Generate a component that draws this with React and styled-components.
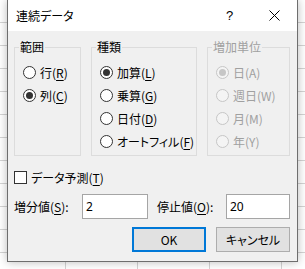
import React from "react";
import styled, { createGlobalStyle } from "styled-components";

const GlobalStyle = createGlobalStyle`
  html, body { margin: 0; padding: 0; }
  body {
    width: 305px;
    height: 269px;
    overflow: hidden;
    background-color: #ffffff;
    background-image:
      linear-gradient(to right, #d4d4d4 1px, transparent 1px),
      linear-gradient(to bottom, #d4d4d4 1px, transparent 1px);
    background-size: 72px 100%, 100% 23px;
    background-position: 65px 0, 0 22px;
    font-family: "Noto Sans CJK JP", "Noto Sans", sans-serif;
    font-feature-settings: "palt";
    font-size: 12px;
    color: #000;
  }
`;

const Dialog = styled.div`
  box-sizing: border-box;
  margin-left: 7px;
  width: 291px;
  height: 262px;
  border: 1px solid #6e6e6e;
  border-top: none;
  background: #f0f0f0;
  box-shadow: 0 0 9px rgba(0, 0, 0, 0.28);
  display: flex;
  flex-direction: column;
`;

const TitleBar = styled.div`
  height: 31px;
  background: #ffffff;
  display: flex;
  align-items: center;
`;

const Title = styled.div`
  flex: 1;
  padding-left: 8px;
  font-size: 12px;
  line-height: 31px;
`;

const TitleButton = styled.div`
  width: 45px;
  height: 31px;
  display: flex;
  align-items: center;
  justify-content: center;
  font-family: "Liberation Sans", sans-serif;
  font-size: 13px;
`;

const Body = styled.div`
  padding: 9px 7px 0 6px;
  display: flex;
  flex-direction: column;
`;

const Groups = styled.div`
  display: grid;
  grid-template-columns: 67px 106px 83px;
  column-gap: 10px;
`;

const Group = styled.fieldset`
  margin: 0;
  padding: 0;
  min-width: 0;
  border: 1px solid #dcdcdc;
`;

const Legend = styled.legend`
  margin-left: 4px;
  padding: 0 1px;
  line-height: 14px;
  font-size: 12px;
  color: ${(p) => (p.$disabled ? "#a0a0a0" : "#000")};
`;

const RadioList = styled.div`
  padding: 7px 0 2px 8px;
  display: flex;
  flex-direction: column;
`;

const OptionRow = styled.label`
  display: flex;
  align-items: center;
  gap: 4px;
  height: 23px;
  white-space: nowrap;
  color: ${(p) => (p.$disabled ? "#a0a0a0" : "#000")};
`;

const RadioCircle = styled.span`
  box-sizing: border-box;
  width: 13px;
  height: 13px;
  flex: none;
  border-radius: 50%;
  border: 1px solid ${(p) => (p.$disabled ? "#c6c6c6" : "#333333")};
  background: ${(p) => (p.$disabled ? "#f4f4f4" : "#ffffff")};
  display: flex;
  align-items: center;
  justify-content: center;
  &::after {
    content: "";
    display: ${(p) => (p.$checked ? "block" : "none")};
    width: 7px;
    height: 7px;
    border-radius: 50%;
    background: ${(p) => (p.$disabled ? "#c6c6c6" : "#333333")};
  }
`;

const Key = styled.span`
  text-decoration: underline;
  text-underline-offset: 2px;
`;

const CheckRow = styled.label`
  margin-top: 15px;
  height: 13px;
  display: flex;
  align-items: center;
  gap: 4px;
`;

const CheckBox = styled.span`
  box-sizing: border-box;
  width: 13px;
  height: 13px;
  border: 1px solid #333333;
  background: #ffffff;
  flex: none;
`;

const FieldRow = styled.div`
  margin-top: 10px;
  height: 25px;
  display: flex;
  align-items: center;
`;

const FieldLabel = styled.label`
  width: ${(p) => p.$w}px;
  margin-left: ${(p) => p.$ml || 0}px;
  white-space: nowrap;
`;

const TextBox = styled.div`
  box-sizing: border-box;
  width: ${(p) => p.$w}px;
  height: 25px;
  border: 1px solid #a5a5a5;
  background: #ffffff;
  padding-left: 3px;
  display: flex;
  align-items: center;
  font-family: "Noto Sans", sans-serif;
  font-size: 12px;
`;

const ButtonRow = styled.div`
  margin-top: 8px;
  display: flex;
  justify-content: flex-end;
  gap: 10px;
`;

const Button = styled.div`
  box-sizing: border-box;
  width: 74px;
  height: 25px;
  display: flex;
  align-items: center;
  justify-content: center;
  background: #e1e1e1;
  border: ${(p) => (p.$primary ? "2px solid #0078d7" : "1px solid #adadad")};
  font-size: 12px;
`;

function Radio({ checked, disabled, children }) {
  return (
    <OptionRow $disabled={disabled}>
      <RadioCircle $checked={checked} $disabled={disabled} />
      <span>{children}</span>
    </OptionRow>
  );
}

export default function App() {
  return (
    <>
      <GlobalStyle />
      <Dialog>
        <TitleBar>
          <Title>連続データ</Title>
          <TitleButton>?</TitleButton>
          <TitleButton>
            <svg width="11" height="11" viewBox="0 0 11 11">
              <path d="M0.5 0.5 L10.5 10.5 M10.5 0.5 L0.5 10.5" stroke="#000" strokeWidth="1" />
            </svg>
          </TitleButton>
        </TitleBar>
        <Body>
          <Groups>
            <Group>
              <Legend>範囲</Legend>
              <RadioList>
                <Radio>行(<Key>R</Key>)</Radio>
                <Radio checked>列(<Key>C</Key>)</Radio>
              </RadioList>
            </Group>
            <Group>
              <Legend>種類</Legend>
              <RadioList>
                <Radio checked>加算(<Key>L</Key>)</Radio>
                <Radio>乗算(<Key>G</Key>)</Radio>
                <Radio>日付(<Key>D</Key>)</Radio>
                <Radio>オートフィル(<Key>F</Key>)</Radio>
              </RadioList>
            </Group>
            <Group>
              <Legend $disabled>増加単位</Legend>
              <RadioList>
                <Radio checked disabled>日(A)</Radio>
                <Radio disabled>週日(W)</Radio>
                <Radio disabled>月(M)</Radio>
                <Radio disabled>年(Y)</Radio>
              </RadioList>
            </Group>
          </Groups>
          <CheckRow>
            <CheckBox />
            <span>データ予測(<Key>T</Key>)</span>
          </CheckRow>
          <FieldRow>
            <FieldLabel $w={68}>増分値(<Key>S</Key>):</FieldLabel>
            <TextBox $w={66}>2</TextBox>
            <FieldLabel $w={69} $ml={9}>停止値(<Key>O</Key>):</FieldLabel>
            <TextBox $w={64}>20</TextBox>
          </FieldRow>
          <ButtonRow>
            <Button $primary>OK</Button>
            <Button>キャンセル</Button>
          </ButtonRow>
        </Body>
      </Dialog>
    </>
  );
}
